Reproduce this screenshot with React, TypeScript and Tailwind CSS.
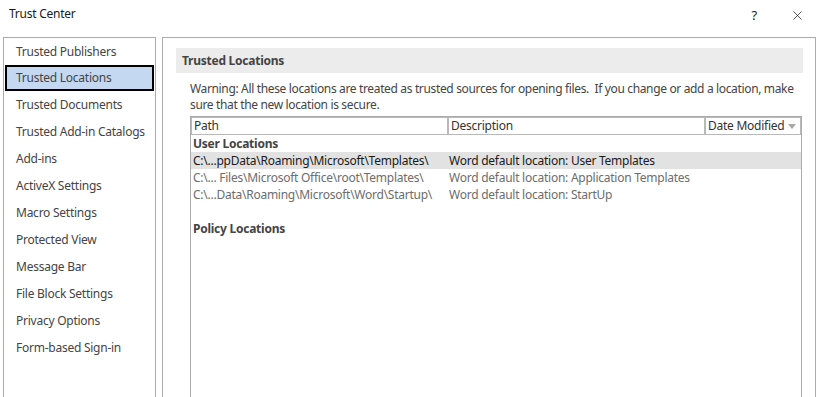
import { X } from 'lucide-react';

const MENU = [
  "Trusted Publishers",
  "Trusted Locations",
  "Trusted Documents",
  "Trusted Add-in Catalogs",
  "Add-ins",
  "ActiveX Settings",
  "Macro Settings",
  "Protected View",
  "Message Bar",
  "File Block Settings",
  "Privacy Options",
  "Form-based Sign-in",
];

const LOCATIONS = [
  { path: "C:\\...ppData\\Roaming\\Microsoft\\Templates\\", desc: "Word default location: User Templates", selected: true },
  { path: "C:\\... Files\\Microsoft Office\\root\\Templates\\", desc: "Word default location: Application Templates", selected: false },
  { path: "C:\\...Data\\Roaming\\Microsoft\\Word\\Startup\\", desc: "Word default location: StartUp", selected: false },
];

export default function App() {
  return (
    <div
      className="w-[818px] h-[397px] bg-white overflow-hidden flex flex-col text-[12px] tracking-[-0.25px] text-[#444]"
      style={{ fontFamily: '"Noto Sans", "Open Sans", sans-serif' }}
    >
      {/* title bar */}
      <div className="h-[37px] flex items-start justify-between pl-[9px] pr-[13px] pt-[5px] text-[#1a1a1a]">
        <span className="text-[12px]">Trust Center</span>
        <div className="flex items-center gap-[33px] pt-[1px]">
          <span className="text-[13px]">?</span>
          <X size={15} strokeWidth={1.2} />
        </div>
      </div>

      <div className="flex flex-1 min-h-0 pl-[3px] gap-[6px]">
        {/* left nav */}
        <div className="w-[153px] border border-b-0 border-[#ababab] px-px">
          {MENU.map((item) =>
            item === "Trusted Locations" ? (
              <div key={item} className="h-[26px] flex items-center pl-[9px] bg-[#c5d8f1] border-2 border-black">
                {item}
              </div>
            ) : (
              <div key={item} className="h-[27px] flex items-center pl-[11px]">
                {item}
              </div>
            )
          )}
        </div>

        {/* main panel */}
        <div className="w-[654px] border border-b-0 border-[#ababab] pt-[10px] pl-[13px] pr-[12px]">
          <div className="h-[25px] bg-[#ececec] flex items-center px-[6px] font-bold text-[#444]">
            Trusted Locations
          </div>

          <div className="pl-[14px] pr-[1px]">
            <p className="mt-[8px] leading-[16px] text-[#444] tracking-[-0.35px]">
              <span className="whitespace-nowrap">
                Warning: All these locations are treated as trusted sources for opening files.&nbsp; If you change or add a location, make
              </span>
              <br />
              sure that the new location is secure.
            </p>

            <div className="mt-[3px] border border-b-0 border-[#ababab] h-[300px]">
              <div className="flex h-[18px] text-[#333]">
                <div className="w-[257px] border border-[#b9b9b9] flex items-center pl-[2px]">Path</div>
                <div className="w-[257px] border border-[#b9b9b9] flex items-center pl-[2px]">Description</div>
                <div className="flex-1 border border-[#b9b9b9] flex items-center pl-[2px] gap-[4px]">
                  Date Modified
                  <svg width="8" height="5" viewBox="0 0 8 5">
                    <path d="M0 0 L8 0 L4 5 Z" fill="#a8a8a8" />
                  </svg>
                </div>
              </div>

              <div className="h-[17px] flex items-center pl-[2px] font-bold text-[#444]">User Locations</div>
              {LOCATIONS.map((loc) => (
                <div
                  key={loc.path}
                  className={`h-[17px] flex items-center ${loc.selected ? "bg-[#e2e2e2] text-[#1a1a1a]" : "text-[#6d6d6d]"}`}
                >
                  <span className="w-[257px] pl-[2px] whitespace-nowrap">{loc.path}</span>
                  <span className="pl-[1px] whitespace-nowrap">{loc.desc}</span>
                </div>
              ))}
              <div className="h-[17px]" />
              <div className="h-[17px] flex items-center pl-[2px] font-bold text-[#444]">Policy Locations</div>
            </div>
          </div>
        </div>
      </div>
    </div>
  );
}
